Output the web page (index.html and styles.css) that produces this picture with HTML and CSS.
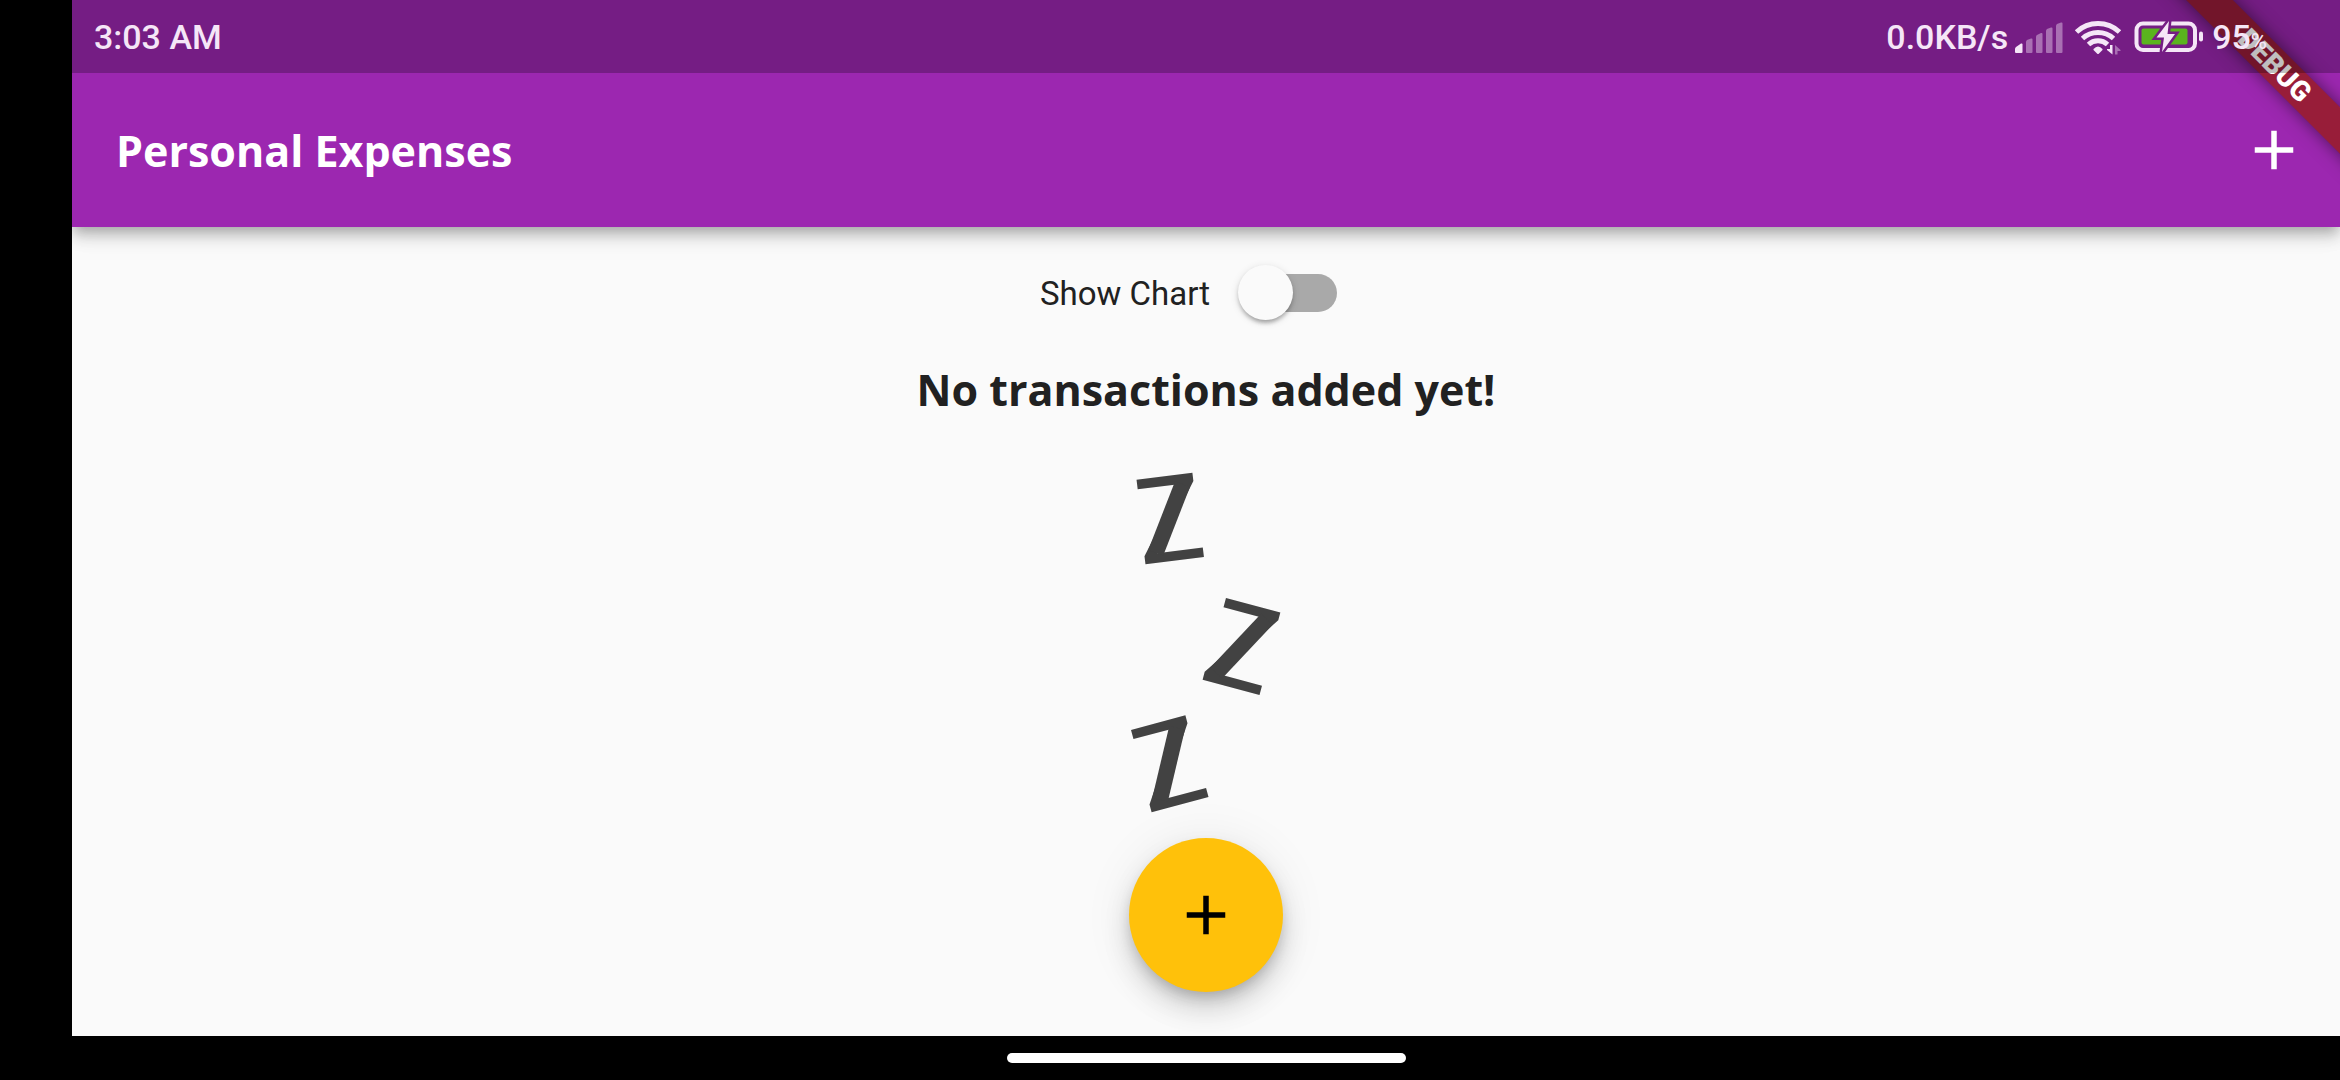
FILE: index.html
```html
<!DOCTYPE html>
<html lang="en">
<head>
<meta charset="utf-8">
<title>Personal Expenses</title>
<meta name="viewport" content="width=device-width, initial-scale=1">
<link rel="stylesheet" href="styles.css">
</head>
<body>
<div class="screen">
  <header class="app-header">
    <div class="status-bar">
      <span class="clock">3:03 AM</span>
      <div class="status-right">
        <span>0.0KB/s</span>
        <svg class="signal" width="50" height="34" viewBox="0 0 50 34" aria-hidden="true">
          <path class="on" d="M1 32V29Q1 28 2 27L7 23.500Q8.500 23 8.500 24.500V32Q8.500 33 7.500 33H2Q1 33 1 32Z"/>
          <path class="off" d="M12 32V22Q12 21 13 20L17 18.500Q18.500 18 18.500 19.500V32Q18.500 33 17.500 33H13Q12 33 12 32Z"/>
          <path class="off" d="M22 32V16.500Q22 15.500 23 15L27 13Q28.500 12.500 28.500 14V32Q28.500 33 27.500 33H23Q22 33 22 32Z"/>
          <path class="off" d="M32 32V11Q32 10 33 9L37 7.500Q38.500 7 38.500 8.500V32Q38.500 33 37.500 33H33Q32 33 32 32Z"/>
          <path class="off" d="M42 32V6Q42 5 43 4L47 2.500Q48.500 2 48.500 3.500V32Q48.500 33 47.500 33H43Q42 33 42 32Z"/>
        </svg>
        <svg class="wifi" width="48" height="36" viewBox="0 0 48 36" aria-hidden="true">
          <g class="wave">
            <path d="M2.500 13A31.500 31.500 0 0 1 45.500 13"/>
            <path d="M8.500 19.500A23 23 0 0 1 39.500 19.500"/>
            <path d="M14.500 25.500A14 14 0 0 1 33.500 25.500"/>
          </g>
          <path class="on" d="M19.500 30Q24 25 28.500 30V31L25 34.500Q24 35.500 23 34.500L19.500 31Z"/>
          <path class="on" d="M36 26H38.500V35.500L33 31V30H36Z"/>
          <path class="off" d="M41 26L46.500 31V32H43.500V35.500H41Z"/>
        </svg>
        <svg class="battery" width="70" height="34" viewBox="0 0 70 34" aria-hidden="true">
          <rect class="case" x="2.500" y="3.500" width="58.500" height="26.500" rx="6.500"/>
          <rect class="charge" x="7.500" y="8.500" width="46" height="16" rx="2"/>
          <rect class="on" x="65" y="11.500" width="4" height="10" rx="2"/>
          <path class="bolt" d="M35 1L22.500 17.500H30L28 32L41 14H33.500Z"/>
        </svg>
        <span>95<small>%</small></span>
      </div>
    </div>
    <div class="toolbar">
      <h1>Personal Expenses</h1>
      <button class="icon-button" type="button" aria-label="Add transaction">
        <svg width="66" height="66" viewBox="0 0 24 24" aria-hidden="true"><path fill="currentColor" d="M19 13h-6v6h-2v-6H5v-2h6V5h2v6h6v2z"/></svg>
      </button>
    </div>
    <div class="corner"><span class="banner">DEBUG</span></div>
  </header>

  <main>
    <div class="chart-row">
      <label for="show-chart">Show Chart</label>
      <input class="switch" type="checkbox" role="switch" id="show-chart">
    </div>
    <h2>No transactions added yet!</h2>
    <svg class="sleeping" width="220" height="346" viewBox="0 0 220 346">
      <g transform="translate(51 94) rotate(-7)">
        <text x="-6">Z</text><line x1="10" y1="-10" x2="45" y2="-75"/>
      </g>
      <g transform="translate(108 210) rotate(15)">
        <text x="-6">Z</text><line x1="10" y1="-10" x2="45" y2="-75"/>
      </g>
      <g transform="translate(57 342) rotate(-15)">
        <text x="-6">Z</text><line x1="10" y1="-10" x2="45" y2="-75"/>
      </g>
    </svg>
    <button class="fab" type="button" aria-label="Add transaction">
      <svg width="66" height="66" viewBox="0 0 24 24" aria-hidden="true"><path fill="currentColor" d="M19 13h-6v6h-2v-6H5v-2h6V5h2v6h6v2z"/></svg>
    </button>
  </main>
</div>
<footer class="gesture-bar"><span class="pill"></span></footer>
</body>
</html>
```
FILE: styles.css
```css
* { box-sizing: border-box; }

body {
  margin: 0;
  min-height: 100vh;
  padding-left: 72px;
  display: flex;
  flex-direction: column;
  background: #000;
  color: #212121;
  font-family: Roboto, sans-serif;
}

.screen {
  flex: 1;
  display: flex;
  flex-direction: column;
  background: #fafafa;
  overflow: hidden;
}

.app-header {
  position: relative;
  background: #9c27b0;
  color: #fff;
  box-shadow: 0 6px 11px -3px rgba(0, 0, 0, 0.2), 0 11px 14px rgba(0, 0, 0, 0.14), 0 3px 28px rgba(0, 0, 0, 0.08);
}

.status-bar {
  position: relative;
  z-index: 2;
  height: 73px;
  padding: 0 73px 0 22px;
  display: flex;
  align-items: center;
  justify-content: space-between;
  background: rgba(0, 0, 0, 0.25);
  color: #f5e6f7;
  font-size: 34px;
  font-weight: 500;
}

.status-right {
  display: flex;
  align-items: center;
}

.status-right small { font-size: 22px; }

.signal { margin-left: 6px; }
.wifi { margin-left: 10px; }
.battery { margin: 0 8px 0 12px; }

.on { fill: #f5e6f7; }
.off { fill: #a970b3; }
.wave { fill: none; stroke: #f5e6f7; stroke-width: 5; }
.case { fill: none; stroke: #f5e6f7; stroke-width: 4; }
.charge { fill: #5ab41e; }
.bolt { fill: #f5e6f7; stroke: #751d84; stroke-width: 5; paint-order: stroke; }

.toolbar {
  height: 154px;
  padding-left: 44px;
  display: flex;
  align-items: center;
  justify-content: space-between;
}

h1, h2 {
  margin: 0;
  font-family: "Open Sans", sans-serif;
  font-size: 43px;
  font-weight: 700;
}

h1 {
  padding-top: 2px;
  line-height: 60px;
}

h2 { line-height: 62px; }

button {
  border: 0;
  padding: 0;
  display: grid;
  place-items: center;
}

.icon-button {
  width: 132px;
  height: 132px;
  background: none;
  color: #fff;
}

.corner {
  position: absolute;
  z-index: 1;
  top: 0;
  right: 0;
  width: 227px;
  height: 227px;
  overflow: hidden;
  pointer-events: none;
}

.banner {
  position: absolute;
  top: 49px;
  right: -85px;
  width: 300px;
  background: rgba(151, 28, 28, 0.8);
  box-shadow: 0 0 17px rgba(0, 0, 0, 0.5);
  font-size: 28px;
  line-height: 33px;
  font-weight: 900;
  text-align: center;
  transform: rotate(45deg);
}

main {
  position: relative;
  flex: 1;
  display: flex;
  flex-direction: column;
  align-items: center;
}

.chart-row {
  height: 132px;
  display: flex;
  align-items: center;
  font-size: 33px;
}

.switch {
  appearance: none;
  position: relative;
  width: 99px;
  height: 56px;
  margin: 0 35px 0 28px;
}

.switch::before {
  content: "";
  position: absolute;
  inset: 9px 0 9px 9px;
  border-radius: 20px;
  background: #a9a9a9;
}

.switch::after {
  content: "";
  position: absolute;
  top: 0;
  left: 0;
  width: 55px;
  height: 55px;
  border-radius: 50%;
  background: #fafafa;
  box-shadow: 0 5px 4px -3px rgba(0, 0, 0, 0.2), 0 3px 4px rgba(0, 0, 0, 0.14), 0 2px 8px rgba(0, 0, 0, 0.12);
}

.switch:checked::after { left: 44px; background: #ffc107; }

.sleeping {
  margin-top: 49px;
  overflow: visible;
  fill: #424242;
  font-family: "Noto Sans", sans-serif;
  font-size: 119px;
}

.sleeping line {
  stroke: #424242;
  stroke-width: 16;
}

.fab {
  position: absolute;
  bottom: 44px;
  width: 154px;
  height: 154px;
  border-radius: 50%;
  background: #ffc10a;
  color: #000;
  box-shadow: 0 8px 14px -3px rgba(0, 0, 0, 0.2), 0 17px 28px rgba(0, 0, 0, 0.14), 0 3px 50px rgba(0, 0, 0, 0.08);
}

.gesture-bar {
  height: 44px;
  display: grid;
  place-items: center;
}

.pill {
  width: 399px;
  height: 10px;
  border-radius: 5px;
  background: #fff;
}
```
